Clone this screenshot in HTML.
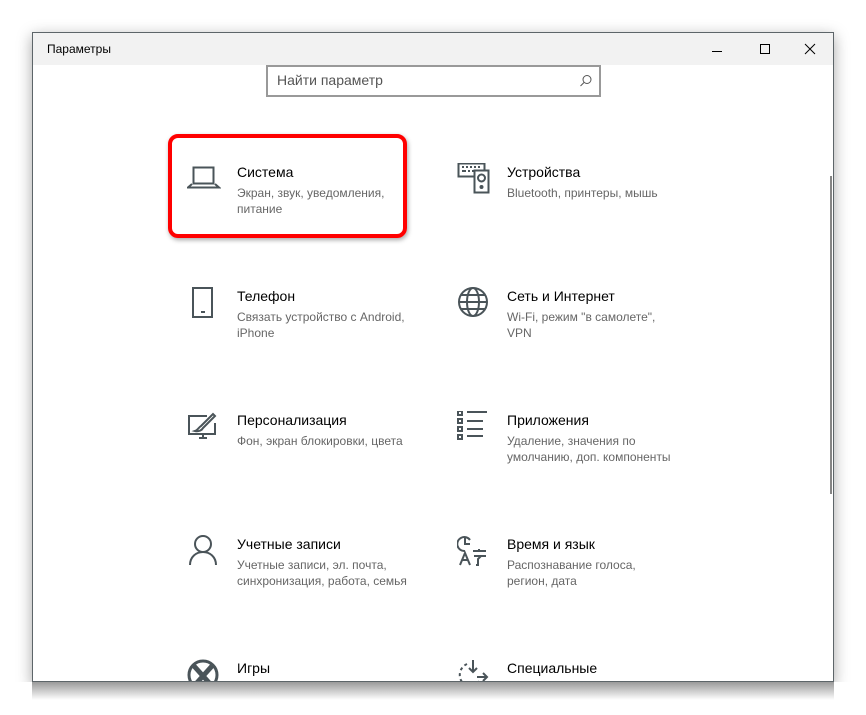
<!DOCTYPE html>
<html><head><meta charset="utf-8"><style>
body{margin:0;width:866px;height:715px;background:#fff;position:relative;overflow:hidden;font-family:"Segoe UI","Liberation Sans",sans-serif;}
.win{position:absolute;left:32px;top:32px;width:800px;height:649px;border:1px solid #5d6569;background:#fff;box-shadow:0 4px 14px rgba(0,0,0,.35);overflow:hidden}
.tb{position:absolute;left:0;top:0;width:800px;height:32px;background:#f2f2f2}
.tt{position:absolute;left:14px;top:9px;font-size:12px;color:#000}
.search{position:absolute;left:233px;top:32px;width:331px;height:28px;border:2px solid #999;background:#fff}
.search span{position:absolute;left:9px;top:5px;font-size:14px;color:#555}
.it{position:absolute;width:260px}
.it .t{position:absolute;left:50px;top:1px;font-size:14px;color:#000;white-space:nowrap}
.it .s{position:absolute;left:50px;top:22px;font-size:12px;line-height:16px;color:#666;white-space:nowrap}
.it svg{position:absolute;left:0;top:0}
.red{position:absolute;left:168px;top:134px;width:231px;height:96px;border:4px solid #f00;border-radius:10px;box-shadow:1px 2px 5px rgba(0,0,0,.35)}
.sb{position:absolute;left:797px;top:143px;width:2px;height:318px;background:#858585}
</style></head><body>
<div class="win">
<div class="tb"><div class="tt">Параметры</div>
<svg style="position:absolute;left:678px;top:10px" width="12" height="12"><path d="M1 8.5h10" stroke="#000" stroke-width="1"/></svg>
<svg style="position:absolute;left:726px;top:10px" width="12" height="12"><rect x="1.5" y="1.5" width="9" height="9" fill="none" stroke="#000"/></svg>
<svg style="position:absolute;left:771px;top:10px" width="12" height="12"><path d="M1 1L11 11M11 1L1 11" stroke="#000"/></svg>
</div>
<div class="search"><span>Найти параметр</span>
<svg style="position:absolute;left:311px;top:7px" width="14" height="14"><circle cx="8" cy="5.5" r="4" fill="none" stroke="#555"/><path d="M5 8.5L1.5 12" stroke="#555"/></svg></div>
<div class="sb"></div>
</div>

<div class="it" style="left:187px;top:163px"><svg width="34" height="30"><rect x="6.5" y="4.5" width="20" height="16" fill="none" stroke="#4a5459" stroke-width="2"/><path d="M5 21L1 24.5h31L28 21" fill="none" stroke="#4a5459" stroke-width="2"/></svg><div class="t">Система</div><div class="s">Экран, звук, уведомления,<br>питание</div></div>

<div class="it" style="left:457px;top:163px"><svg width="36" height="32"><rect x="1.5" y="0.5" width="26" height="13" fill="none" stroke="#4a5459" stroke-width="2"/><path d="M5 4h2M9 4h2M13 4h2M17 4h2M21 4h2M5 8h4M11 8h2M15 8h2" stroke="#4a5459" stroke-width="2"/><rect x="17.5" y="7.5" width="14" height="22" fill="#fff" stroke="#4a5459" stroke-width="2"/><circle cx="24.5" cy="15" r="3.5" fill="none" stroke="#4a5459" stroke-width="2"/><circle cx="24.5" cy="24" r="2" fill="#4a5459"/></svg><div class="t">Устройства</div><div class="s">Bluetooth, принтеры, мышь</div></div>

<div class="it" style="left:187px;top:287px"><svg width="34" height="34"><rect x="6" y="1" width="19" height="29" fill="none" stroke="#4a5459" stroke-width="2"/><path d="M14 25h4" stroke="#4a5459" stroke-width="2"/></svg><div class="t">Телефон</div><div class="s">Связать устройство с Android,<br>iPhone</div></div>

<div class="it" style="left:457px;top:287px"><svg width="34" height="34"><g fill="none" stroke="#4a5459" stroke-width="2"><circle cx="16" cy="15" r="14"/><ellipse cx="16" cy="15" rx="6" ry="14"/><path d="M2 15h28M4 8h24M4 22h24"/></g></svg><div class="t">Сеть и Интернет</div><div class="s">Wi-Fi, режим "в самолете",<br>VPN</div></div>

<div class="it" style="left:187px;top:411px"><svg width="34" height="34"><g fill="none" stroke="#4a5459" stroke-width="2"><path d="M20 5H2v18h26V12"/><path d="M12 27h8M16 23v4"/><path d="M8 20c3-1 4-4 6-5l12-12 2 2-12 12c-1 2-4 4-8 3z"/></g></svg><div class="t">Персонализация</div><div class="s">Фон, экран блокировки, цвета</div></div>

<div class="it" style="left:457px;top:411px"><svg width="34" height="30"><g fill="none" stroke="#4a5459" stroke-width="2"><rect x="1" y="0" width="4" height="4"/><rect x="1" y="8" width="4" height="4"/><rect x="1" y="16" width="4" height="4"/><rect x="1" y="24" width="4" height="4"/><path d="M10 1h20M10 10h16M10 18h16M10 25h16"/></g></svg><div class="t">Приложения</div><div class="s">Удаление, значения по<br>умолчанию, доп. компоненты</div></div>

<div class="it" style="left:187px;top:535px"><svg width="34" height="34"><g fill="none" stroke="#4a5459" stroke-width="2"><circle cx="16" cy="9" r="8"/><path d="M3 30c0-8 6-13 13-13s13 5 13 13"/></g></svg><div class="t">Учетные записи</div><div class="s">Учетные записи, эл. почта,<br>синхронизация, работа, семья</div></div>

<div class="it" style="left:457px;top:535px"><svg width="34" height="34"><g fill="none" stroke="#4a5459" stroke-width="2"><path d="M13 5A7 7 0 1 0 8 16"/><path d="M8 3v6h5"/><path d="M3 30l5-12 5 12M5 25h6M16 16h13M22 14v3M17 21h12M24 21l-3 3v6h-2"/></g></svg><div class="t">Время и язык</div><div class="s">Распознавание голоса,<br>регион, дата</div></div>

<div class="it" style="left:187px;top:659px"><svg width="34" height="30"><circle cx="16" cy="16" r="14" fill="none" stroke="#4a5459" stroke-width="3"/><path d="M7 7L25 27M25 7L7 27" stroke="#4a5459" stroke-width="5"/></svg><div class="t">Игры</div></div>

<div class="it" style="left:457px;top:659px"><svg width="34" height="30"><g fill="none" stroke="#4a5459" stroke-width="2"><path d="M10 5a12 12 0 0 0-5 18" stroke-dasharray="3 3"/><path d="M16 1v12M12 9l4 4 4-4M20 18h10M26 14l4 4-4 4M22 22l-2 6"/></g></svg><div class="t">Специальные</div></div>

<div class="red"></div>
<div style="position:absolute;left:0;top:682px;width:866px;height:33px;background:#fff"></div>
<div style="position:absolute;left:32px;top:682px;width:802px;height:18px;background:linear-gradient(#9a9a9a,#fff)"></div>
<div style="position:absolute;left:32px;top:681px;width:802px;height:1px;background:#5d6569"></div>
</body></html>
